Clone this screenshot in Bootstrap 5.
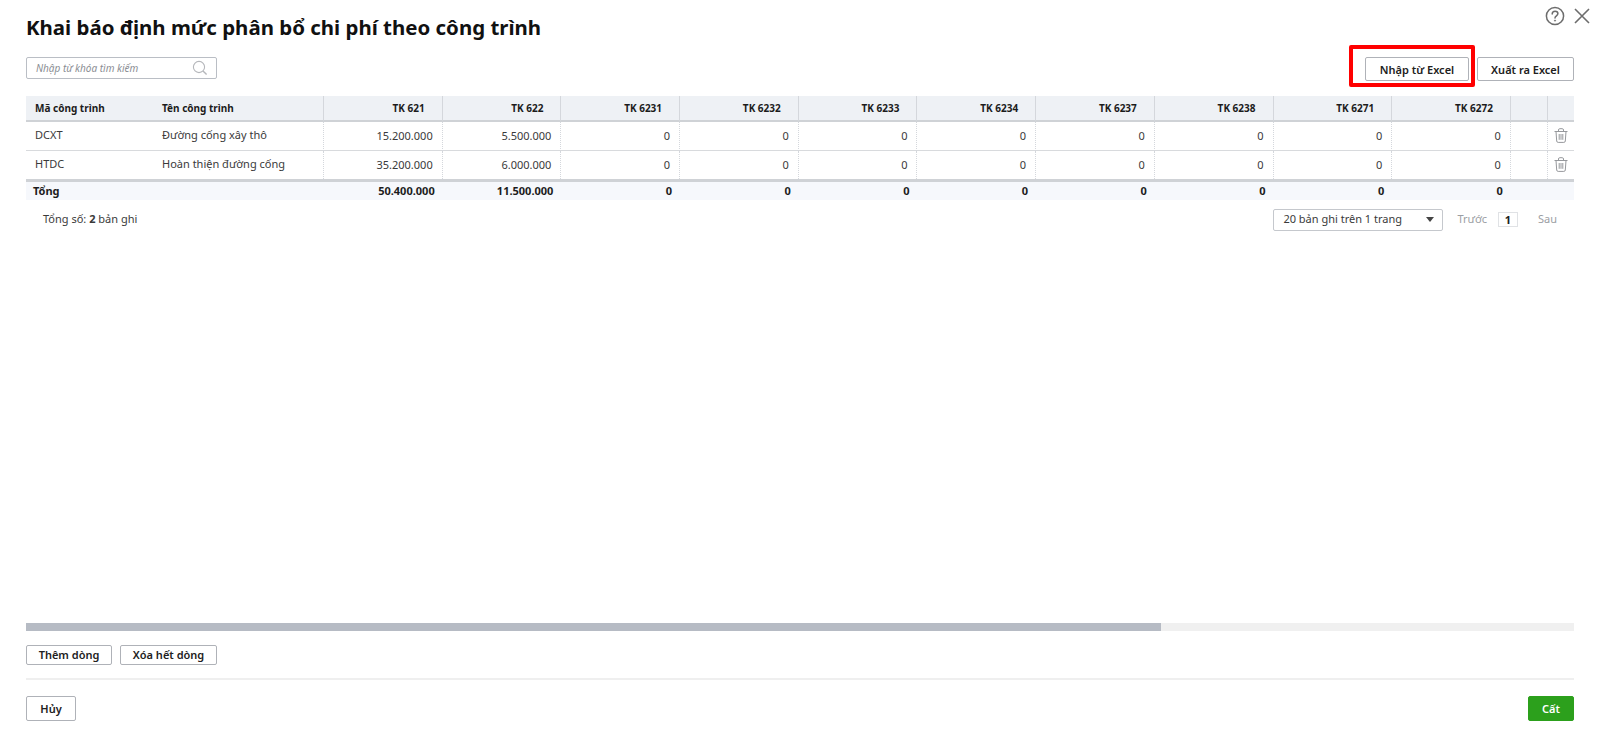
<!DOCTYPE html>
<html lang="vi">
<head>
<meta charset="utf-8">
<title>Khai báo định mức phân bổ chi phí theo công trình</title>
<link href="https://cdn.jsdelivr.net/npm/bootstrap@5.3.0/dist/css/bootstrap.min.css" rel="stylesheet">
<style>
html,body{height:732px;overflow:hidden}
body{font-family:"Noto Sans",sans-serif;font-size:11px;color:#212121;background:#fff}
.dlg{height:732px;padding:0 26px 11px}
.dlg-top{position:absolute;top:6px;right:10px;gap:9px}
.dlg-title{font-size:20.45px;font-weight:700;line-height:28px;margin:13px 0 16px;color:#111}
.tool-row{height:24px;margin-bottom:15px}
.search-box{width:191px;height:22px;border:1px solid #babec5;border-radius:2px;padding:0 8px 0 9px;font-size:10px;font-style:italic;color:#8a8d93}
.act{background:#fff;border:1px solid #afb2b8;border-radius:2px;font-size:11px;font-weight:600;color:#212121;padding:0;line-height:1;box-shadow:none}
.mark-wrap{position:relative}
.red-mark{position:absolute;left:-16px;top:-12px;width:126px;height:42px;border:4px solid #f00;border-radius:2px;pointer-events:none}
.grid-tb{table-layout:fixed;width:1548px;margin:0;border-collapse:separate;border-spacing:0;font-size:11px}
.grid-tb th,.grid-tb td{padding:0 7px 0 9px;color:#212121;background:transparent;box-shadow:none;white-space:nowrap;vertical-align:middle}
.grid-tb thead th{height:26px;padding-bottom:0;background:#eef1f5;border-bottom:2px solid #cfd2d6;border-right:1px solid #d4d7dc;font-size:10px;font-weight:700;color:#1c1c1c}
.grid-tb thead th:nth-child(n+3){padding-right:17px}
.grid-tb thead th:nth-child(-n+1){border-right:0}
.grid-tb thead th:last-child{border-right:0}
.grid-tb tbody td{height:29px;padding-bottom:2px;border-bottom:1px solid #d8dadd;border-right:1px dotted #d4d7dc;color:#3a3a3a}
.grid-tb tbody td.text-end{padding-top:1px;padding-bottom:1px;padding-right:9px}
.grid-tb tbody td:first-child{border-right:0}
.grid-tb tbody td:last-child{border-right:0;padding:0 0 2px;text-align:center}
.grid-tb tbody tr:last-child td{border-bottom:0;height:28px}
.grid-tb tfoot td{height:21px;padding-top:0;border-top:3px solid #cfd2d6;border-bottom:0;background:#f6f8fc;font-weight:700;color:#1c1c1c}
.grid-tb tfoot td:first-child{padding-left:7px}
.grid-tb tfoot td.text-end{padding-right:8px}
.pager-row{height:21px;margin-top:9px;padding-left:17px;color:#3a3a3a}
.page-sel{width:170px;height:22px;border:1px solid #c5c8cd;border-radius:2px;padding:0 8px 0 9px}
.caret-d{width:0;height:0;border-left:4px solid transparent;border-right:4px solid transparent;border-top:5px solid #444}
.pg-mute{color:#9b9ea3}
.pg-cur{width:20px;height:15px;border:1px solid #e0e2e5;font-weight:700;color:#212121;line-height:13px;text-align:center;margin:0 20px 0 11px}
.pg-prev{margin-left:14px}
.pg-next{margin-right:17px}
.hscroll{height:8px;background:#f0f0f0}
.hthumb{width:1135px;height:8px;background:#b6bbc4}
.row-acts{margin-top:14px;gap:8px}
.row-acts .act{height:20px;padding-bottom:1px}
.sep{height:2px;background:#efefef;margin:13px 0 16px}
.foot-btn{height:25px}
.btn-save{background:#2ca01c;border:1px solid #2ca01c;border-radius:2px;color:#fff;font-size:11px;font-weight:600;width:46px;height:25px;padding:0;line-height:1}
</style>
</head>
<body>
<div class="dlg d-flex flex-column position-relative">
  <div class="dlg-top d-flex align-items-center">
    <svg width="20" height="20" viewBox="0 0 20 20" fill="none" stroke="#6d6d6d" stroke-width="1.5"><circle cx="10" cy="10" r="8.6"/><path d="M7.2 8c0-1.700 1.200-2.800 2.900-2.800 1.600 0 2.800 1 2.800 2.400 0 2.200-2.900 2.200-2.900 4.400" stroke-linecap="round"/><circle cx="10" cy="14.600" r=".6" fill="#6d6d6d" stroke-width=".8"/></svg>
    <svg width="16" height="16" viewBox="0 0 16 16" fill="none" stroke="#6d6d6d" stroke-width="1.6"><path d="M1 1l14 14M15 1L1 15"/></svg>
  </div>
  <h1 class="dlg-title">Khai báo định mức phân bổ chi phí theo công trình</h1>
  <div class="tool-row d-flex justify-content-between align-items-start">
    <div class="search-box d-flex align-items-center justify-content-between">
      <span>Nhập từ khóa tìm kiếm</span>
      <svg width="16" height="16" viewBox="0 0 16 16" fill="none" stroke="#b5b7bb" stroke-width="1.1"><circle cx="7" cy="7" r="5.6"/><path d="M11 11l3.600 3.600" stroke-width="1.4"/></svg>
    </div>
    <div class="d-flex" style="gap:8px">
      <div class="mark-wrap">
        <button type="button" class="act" style="width:104px;height:24px">Nhập từ Excel</button>
        <span class="red-mark"></span>
      </div>
      <button type="button" class="act" style="width:97px;height:24px">Xuất ra Excel</button>
    </div>
  </div>
  <table class="table grid-tb">
    <colgroup>
      <col style="width:127px"><col style="width:171px">
      <col style="width:118.7px"><col style="width:118.7px"><col style="width:118.7px"><col style="width:118.7px"><col style="width:118.7px"><col style="width:118.7px"><col style="width:118.7px"><col style="width:118.7px"><col style="width:118.7px"><col style="width:118.7px">
      <col style="width:37px"><col style="width:26px">
    </colgroup>
    <thead>
      <tr>
        <th>Mã công trình</th><th>Tên công trình</th>
        <th class="text-end">TK 621</th><th class="text-end">TK 622</th><th class="text-end">TK 6231</th><th class="text-end">TK 6232</th><th class="text-end">TK 6233</th><th class="text-end">TK 6234</th><th class="text-end">TK 6237</th><th class="text-end">TK 6238</th><th class="text-end">TK 6271</th><th class="text-end">TK 6272</th><th></th><th></th>
      </tr>
    </thead>
    <tbody>
      <tr>
        <td>DCXT</td><td>Đường cống xây thô</td>
        <td class="text-end">15.200.000</td><td class="text-end">5.500.000</td><td class="text-end">0</td><td class="text-end">0</td><td class="text-end">0</td><td class="text-end">0</td><td class="text-end">0</td><td class="text-end">0</td><td class="text-end">0</td><td class="text-end">0</td><td></td>
        <td><svg width="14" height="15" viewBox="0 0 14 15" fill="none" stroke="#96989c" stroke-width="1"><path d="M.5 3.500h13M4.500 3.500V2q0-1.300 1.300-1.300h2.400q1.300 0 1.300 1.300v1.500M2 3.500l.7 9.500q.1 1.400 1.500 1.400h5.600q1.400 0 1.500-1.400l.7-9.500M5.200 6v5.800M7 6v5.800M8.800 6v5.800"/></svg></td>
      </tr>
      <tr>
        <td>HTDC</td><td>Hoàn thiện đường cống</td>
        <td class="text-end">35.200.000</td><td class="text-end">6.000.000</td><td class="text-end">0</td><td class="text-end">0</td><td class="text-end">0</td><td class="text-end">0</td><td class="text-end">0</td><td class="text-end">0</td><td class="text-end">0</td><td class="text-end">0</td><td></td>
        <td><svg width="14" height="15" viewBox="0 0 14 15" fill="none" stroke="#96989c" stroke-width="1"><path d="M.5 3.500h13M4.500 3.500V2q0-1.300 1.300-1.300h2.400q1.300 0 1.300 1.300v1.500M2 3.500l.7 9.500q.1 1.400 1.500 1.400h5.600q1.400 0 1.500-1.400l.7-9.500M5.200 6v5.800M7 6v5.800M8.800 6v5.800"/></svg></td>
      </tr>
    </tbody>
    <tfoot>
      <tr>
        <td>Tổng</td><td></td>
        <td class="text-end">50.400.000</td><td class="text-end">11.500.000</td><td class="text-end">0</td><td class="text-end">0</td><td class="text-end">0</td><td class="text-end">0</td><td class="text-end">0</td><td class="text-end">0</td><td class="text-end">0</td><td class="text-end">0</td><td></td><td></td>
      </tr>
    </tfoot>
  </table>
  <div class="pager-row d-flex justify-content-between align-items-center">
    <span>Tổng số: <b>2</b> bản ghi</span>
    <div class="d-flex align-items-center">
      <div class="page-sel d-flex align-items-center justify-content-between"><span>20 bản ghi trên 1 trang</span><span class="caret-d"></span></div>
      <span class="pg-mute pg-prev">Trước</span>
      <span class="pg-cur">1</span>
      <span class="pg-mute pg-next">Sau</span>
    </div>
  </div>
  <div class="flex-grow-1"></div>
  <div class="hscroll"><div class="hthumb"></div></div>
  <div class="row-acts d-flex">
    <button type="button" class="act" style="width:86px">Thêm dòng</button>
    <button type="button" class="act" style="width:97px">Xóa hết dòng</button>
  </div>
  <div class="sep"></div>
  <div class="d-flex justify-content-between">
    <button type="button" class="act foot-btn" style="width:50px">Hủy</button>
    <button type="button" class="btn-save">Cất</button>
  </div>
</div>
<script src="https://cdn.jsdelivr.net/npm/bootstrap@5.3.0/dist/js/bootstrap.bundle.min.js"></script>
</body>
</html>
